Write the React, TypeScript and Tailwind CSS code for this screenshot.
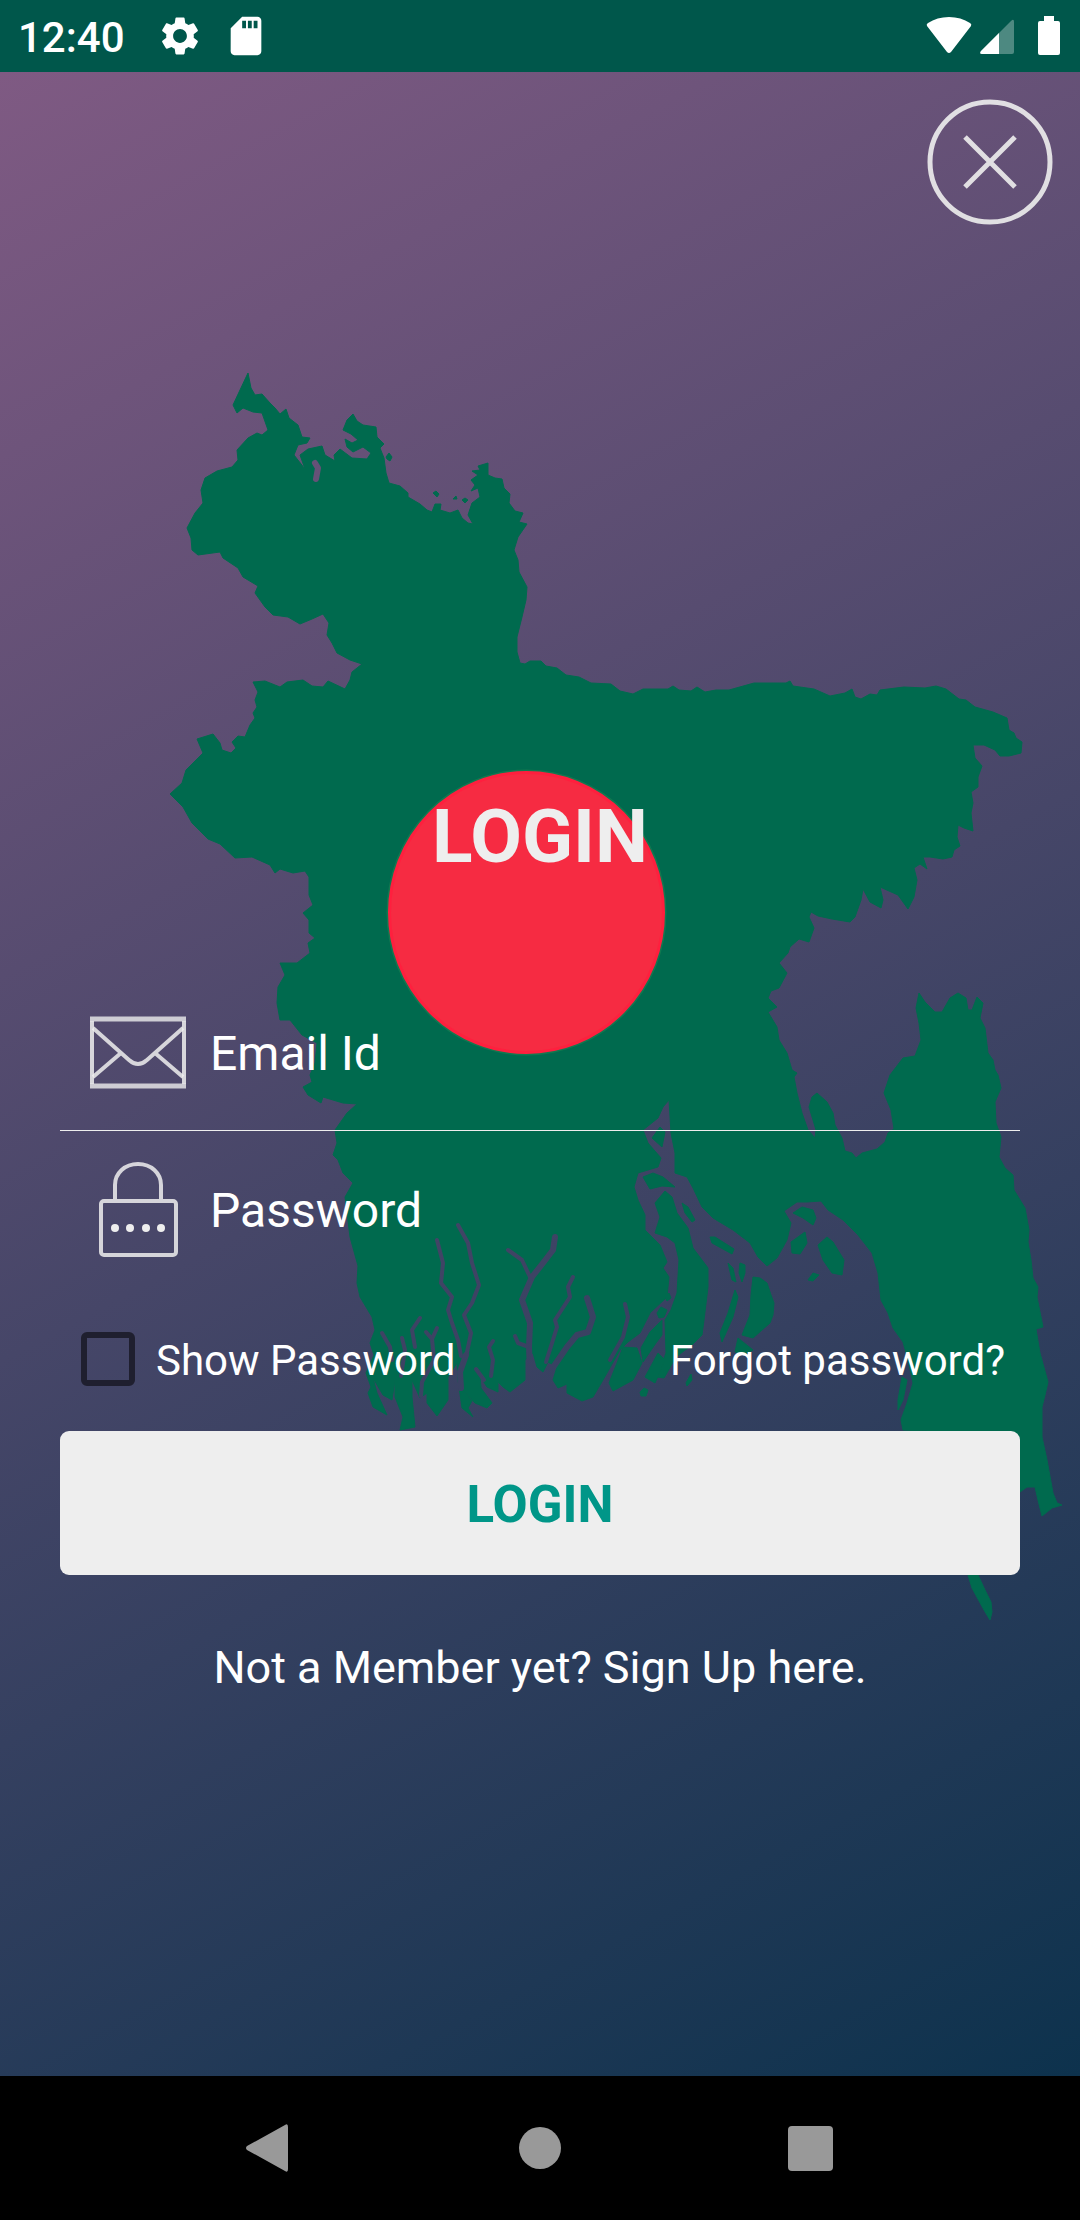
import { useState } from "react";
import { MdSdCard, MdSettings } from "react-icons/md";

const MAINLAND =
  "M248 373L251 388 255 395 262 394 270 403 275 408 280 414 286 409 289 418 298 425 302 437 310 438 307 443 298 445 294 455 305 469 300 455 308 449 322 446 325 455 335 461 334 455 340 449 352 458 367 459 371 453 363 447 353 452 347 447 345 439 352 443 358 440 351 434 343 430 347 420 353 414 357 421 363 425 376 427 377 437 384 444 380 448 384 458 386 473 389 483 400 486 408 493 408 497 420 504 427 510 432 512 435 504 441 504 440 510 450 513 458 510 462 518 468 523 473 524 468 515 472 503 480 497 478 488 471 491 475 485 471 480 478 475 472 471 480 470 478 466 488 463 488 475 495 478 502 479 504 488 510 494 509 503 515 511 523 513 519 522 527 524 518 537 514 550 518 560 519 572 527 587 526 600 522 617 517 637 517 652 520 663 525 664 530 661 541 661 546 666 557 668 566 675 579 677 591 683 611 684 620 691 633 694 643 689 668 689 673 686 679 690 691 691 697 687 705 692 716 690 729 690 754 683 786 683 790 681 793 686 814 689 830 696 845 693 852 689 855 697 861 699 870 694 877 695 880 690 904 687 925 688 936 686 946 689 959 699 966 700 975 707 993 712 1007 718 1009 730 1014 733 1016 738 1022 742 1021 753 1009 756 1000 756 995 750 984 745 973 745 975 758 982 766 978 777 978 787 971 792 973 803 971 813 973 831 964 828 958 825 957 837 960 846 954 850 952 857 943 859 930 857 923 857 927 869 920 864 914 868 917 880 914 897 908 909 898 895 880 887 883 900 881 908 870 902 863 889 861 900 855 917 850 922 832 919 818 916 811 912 809 917 814 928 809 942 799 939 790 947 788 953 779 963 787 973 779 988 771 991 768 998 777 1007 768 1012 777 1027 779 1040 787 1053 792 1070 797 1073 794 1077 797 1093 802 1113 808 1130 815 1138 816 1130 809 1107 812 1097 817 1093 827 1102 833 1113 835 1125 842 1138 845 1151 852 1153 856 1158 862 1153 877 1149 885 1142 888 1133 894 1129 891 1110 884 1093 890 1075 903 1058 915 1056 921 1040 919 1023 916 1008 919 993 925 1002 935 1012 942 1012 950 998 958 993 966 998 968 1010 972 1010 977 997 983 1003 980 1018 985 1028 988 1053 993 1060 995 1070 998 1075 1001 1088 995 1102 996 1123 1001 1137 999 1157 1005 1168 1013 1175 1014 1190 1025 1208 1029 1230 1028 1242 1031 1260 1033 1278 1038 1287 1037 1297 1043 1327 1036 1329 1040 1353 1048 1382 1045 1395 1042 1407 1042 1437 1047 1460 1053 1493 1057 1503 1062 1505 1052 1508 1042 1516 1038 1500 1035 1487 1027 1487 1020 1492 1000 1500 978 1575 985 1590 991 1602 992 1612 990 1620 984 1610 972 1588 968 1575 950 1500 927 1431 903 1430 901 1420 907 1403 913 1383 908 1360 903 1342 893 1328 888 1313 881 1300 878 1273 872 1253 858 1235 843 1220 828 1210 821 1201 807 1202 797 1202 784 1211 791 1223 787 1240 777 1258 767 1266 758 1257 750 1243 733 1230 713 1218 702 1207 693 1188 687 1177 675 1173 675 1153 671 1133 669 1100 663 1107 658 1118 643 1130 648 1143 661 1158 658 1167 638 1173 634 1187 638 1200 645 1215 645 1230 660 1245 667 1262 663 1268 669 1277 667 1297 650 1313 640 1333 628 1342 620 1350 603 1380 593 1397 582 1401 567 1393 567 1384 558 1388 553 1380 557 1367 548 1362 543 1372 537 1367 533 1353 525 1360 525 1380 510 1392 503 1387 498 1382 498 1392 487 1387 480 1376 481 1388 492 1403 487 1408 475 1403 463 1390 472 1401 468 1408 473 1417 462 1408 458 1380 457 1363 448 1377 448 1400 437 1416 427 1403 427 1393 420 1398 412 1380 412 1397 415 1427 400 1430 403 1417 395 1397 395 1380 392 1400 383 1395 373 1378 377 1393 387 1415 373 1407 368 1393 371 1387 366 1373 374 1355 370 1343 375 1330 372 1317 360 1297 357 1283 358 1266 350 1237 345 1197 353 1183 343 1173 338 1160 333 1155 337 1143 335 1130 347 1113 357 1104 343 1103 323 1097 321 1103 308 1095 303 1087 312 1082 310 1075 315 1063 317 1043 302 1035 290 1020 280 1020 277 1003 278 987 285 975 280 963 297 963 310 953 308 943 315 938 309 933 309 920 303 913 313 905 309 895 309 877 305 871 293 873 280 869 275 873 270 865 252 857 235 858 220 844 208 839 192 823 183 807 170 794 182 783 186 770 203 753 197 739 213 734 220 743 222 750 231 753 236 748 232 742 238 736 245 737 250 725 255 718 253 713 257 707 255 700 258 692 253 682 265 681 280 687 287 682 303 680 312 686 323 687 328 681 345 689 350 680 352 672 362 664 350 660 337 653 332 643 327 635 329 623 323 614 312 619 300 624 288 617 273 615 265 607 255 593 258 586 243 577 238 568 223 558 220 552 198 555 192 550 191 538 187 528 195 513 203 503 201 490 205 478 217 471 232 467 238 460 237 450 248 438 257 433 262 435 268 430 262 413 253 412 243 408 237 413 233 405 240 390Z";

const ISLANDS = [
  "M652 1138L660 1127 665 1132 662 1147Z",
  "M643 1177L653 1173 663 1177 675 1187 662 1186 650 1189Z",
  "M665 1191L672 1197 677 1213 688 1228 693 1248 708 1268 708 1287 704 1320 702 1335 693 1344 676 1357 664 1378 657 1377 666 1353 665 1320 671 1310 677 1293 679 1260 675 1243 667 1237 655 1233 660 1217 655 1203Z",
  "M682 1203L688 1207 695 1220 692 1222 685 1213Z",
  "M710 1237L715 1237 734 1249 732 1254 712 1243Z",
  "M728 1263L733 1268 736 1282 732 1280Z",
  "M740 1263L745 1265 745 1273 742 1282 739 1273Z",
  "M735 1290L738 1297 733 1317 722 1342 720 1333 728 1313Z",
  "M753 1277L760 1278 767 1283 771 1295 774 1303 773 1315 770 1323 753 1338 742 1335 750 1315 751 1295Z",
  "M738 1338L753 1350 745 1354 735 1352Z",
  "M793 1213L802 1207 813 1210 816 1218 813 1225 803 1218Z",
  "M805 1232L807 1243 800 1254 792 1253 791 1242Z",
  "M827 1237L833 1242 844 1260 842 1275 832 1273 823 1260 818 1245Z",
  "M808 1280L813 1273 819 1275 813 1281Z",
  "M902 1377L907 1380 903 1400 898 1410 898 1400Z",
  "M662 1320L662 1335 656 1343 643 1362 641 1348 650 1332Z",
  "M623 1347L637 1348 642 1363 633 1380 613 1391 609 1383 617 1363Z",
  "M658 1353L665 1360 655 1383 645 1377Z",
  "M640 1392L644 1388 648 1390 646 1396 641 1396Z",
  "M657 1313L661 1307 667 1310 664 1317 659 1318Z",
  "M665 1297L669 1293 671 1298 667 1301Z",
  "M686 1383L691 1374 692 1380 687 1386Z",
  "M386 457L389 453 392 457 390 461 387 459Z",
  "M433 493L436 491 439 494 437 497Z",
  "M453 499L456 496 457 499Z",
  "M462 500L465 498 468 500 465 503Z",
];

const RIVERS = [
  "M437 1240L443 1263 441 1283 452 1297 448 1310 452 1323 458 1340 461 1356",
  "M458 1225L468 1243 472 1263 479 1285 472 1303 464 1315 471 1333 466 1357",
  "M508 1250L522 1260 530 1277",
  "M573 1277L568 1287 570 1297 555 1320 557 1327 552 1343 546 1362",
  "M625 1304L628 1317 623 1337 610 1360",
  "M420 1318L412 1330 415 1347",
  "M382 1333L390 1347 392 1360",
  "M402 1338L405 1350 401 1376",
  "M426 1332L432 1339 437 1328M432 1339L434 1360 422 1382 421 1396",
  "M493 1341L489 1347 493 1360 491 1376M476 1369L484 1380",
  "M515 1336L518 1343 529 1347",
];

const WIDE_RIVERS = [
  "M555 1237L553 1250 543 1263 532 1277 522 1300 530 1323 529 1347 530 1372",
  "M587 1298L593 1317 588 1332 577 1335 567 1347 554 1366",
  "M466 1355L460 1372 461 1388",
  "M315 463L318 468 316 479",
];

function MapArt() {
  return (
    <svg
      aria-hidden="true"
      viewBox="0 72 1080 2004"
      className="pointer-events-none absolute inset-0 h-full w-full"
    >
      <mask id="rivers" maskUnits="userSpaceOnUse" x="0" y="72" width="1080" height="2004">
        <rect x="0" y="72" width="1080" height="2004" fill="white" />
        <g fill="none" stroke="black" strokeLinecap="round" strokeLinejoin="round">
          {RIVERS.map((d) => (
            <path key={d} d={d} strokeWidth="4" />
          ))}
          {WIDE_RIVERS.map((d) => (
            <path key={d} d={d} strokeWidth="6" />
          ))}
        </g>
      </mask>
      <g fill="#006a4e" stroke="#006a4e" strokeWidth="1" strokeLinejoin="round">
        <path d={MAINLAND} mask="url(#rivers)" />
        {ISLANDS.map((d) => (
          <path key={d} d={d} />
        ))}
      </g>
      <ellipse cx="526.5" cy="912.5" rx="140" ry="143" fill="#117850" />
      <ellipse cx="526.5" cy="912.5" rx="137" ry="140" fill="#f62b42" stroke="#ff1f3e" strokeWidth="3" />
    </svg>
  );
}

function StatusBar() {
  return (
    <header className="flex h-[72px] items-center justify-between bg-[#00574b] pr-5 pl-[18px] text-white">
      <div className="flex items-center">
        <span className="pt-1 text-[42px] leading-none font-medium">12:40</span>
        <MdSettings size={46} className="ml-8" />
        <MdSdCard size={46} className="ml-5" />
      </div>
      <div className="flex items-center">
        <svg width="46" height="40" viewBox="0 0 46 40" fill="currentColor" aria-hidden="true">
          <path d="M1 10Q0 8 2 7Q11 1 23 1T44 7Q46 8 45 10L25 36Q23 38 21 36Z" />
        </svg>
        <svg width="34" height="40" viewBox="0 0 34 40" fill="currentColor" aria-hidden="true" className="ml-2">
          <path d="M31 5Q34 2 34 6V36Q34 38 32 38H2Q-1 38 1 35Z" opacity="0.3" />
          <path d="M19 17V38H2Q-1 38 1 35Z" />
        </svg>
        <svg width="22" height="40" viewBox="0 0 22 40" fill="currentColor" aria-hidden="true" className="ml-6">
          <path d="M6 0H16V5H20Q22 5 22 7V37Q22 39 20 39H2Q0 39 0 37V7Q0 5 2 5H6Z" />
        </svg>
      </div>
    </header>
  );
}

function MailIcon() {
  return (
    <svg width="96" height="96" viewBox="0 0 96 96" fill="none" stroke="#eeeeee" strokeOpacity="0.85" strokeWidth="4" aria-hidden="true" className="shrink-0">
      <path d="M0 15H96M0 82H96" strokeWidth="5" strokeOpacity="0.8" />
      <path d="M2 17V80M94 17V80" />
      <path d="M3 24L39 56Q48 64 57 56L93 24M3 73L31 49M93 73L65 49" />
    </svg>
  );
}

function LockIcon() {
  return (
    <svg width="96" height="96" viewBox="0 0 96 96" fill="none" stroke="#eeeeee" strokeOpacity="0.85" strokeWidth="4" aria-hidden="true" className="shrink-0">
      <rect x="11" y="40" width="75" height="54" rx="3" />
      <path d="M25 38V24C25 12 35 3 48 3S71 12 71 24V38" />
      <g fill="#eeeeee" stroke="none">
        <circle cx="25" cy="67" r="4" />
        <circle cx="40" cy="67" r="4" />
        <circle cx="56" cy="67" r="4" />
        <circle cx="71" cy="67" r="4" />
      </g>
    </svg>
  );
}

const FIELD =
  "min-w-0 flex-1 bg-transparent pt-1 text-[48px] leading-[56px] text-white outline-none placeholder:text-white placeholder:opacity-100";

export default function App() {
  const [shown, setShown] = useState(false);

  return (
    <div className="flex min-h-screen flex-col font-['Roboto',sans-serif]">
      <StatusBar />

      <main className="relative flex-1 bg-[linear-gradient(152deg,#7f5a83,#0d324d)]">
        <MapArt />
        <div className="relative">
          <div className="flex justify-end p-[27px]">
            <button type="button" aria-label="Close">
              <svg width="126" height="126" viewBox="0 0 126 126" fill="none" stroke="#eeeeee" strokeOpacity="0.9" aria-hidden="true">
                <circle cx="63" cy="63" r="60" strokeWidth="5" />
                <path d="M38 38L88 88M88 38L38 88" strokeWidth="5" />
              </svg>
            </button>
          </div>

          <form className="mt-[540px] px-[60px]" onSubmit={(e) => e.preventDefault()}>
            <h1 className="mb-[94px] text-center text-[75px] leading-[88px] font-bold text-[#eeeeee]">LOGIN</h1>

            <label className="flex h-[156px] items-center gap-6 px-[30px]">
              <MailIcon />
              <input type="email" aria-label="Email Id" placeholder="Email Id" className={FIELD} />
            </label>
            <div className="h-px bg-[#eeeeee]" />
            <label className="flex h-[156px] items-center gap-6 px-[30px]">
              <LockIcon />
              <input
                type={shown ? "text" : "password"}
                aria-label="Password"
                placeholder="Password"
                className={FIELD}
              />
            </label>

            <div className="flex h-[144px] items-center justify-between pr-[15px] pl-[21px] text-[42px] leading-[50px] text-white">
              <label className="flex items-center gap-[21px]">
                <input
                  type="checkbox"
                  checked={shown}
                  onChange={(e) => setShown(e.target.checked)}
                  className="size-[54px] appearance-none rounded-[6px] border-[6px] border-[#1f1f2f] checked:bg-[#009688]"
                />
                <span className="pt-1">Show Password</span>
              </label>
              <a href="#forgot" className="pt-1">
                Forgot password?
              </a>
            </div>

            <button
              type="submit"
              className="h-[144px] w-full rounded-[9px] bg-[#eeeeee] pt-1 text-[51px] font-bold text-[#009688]"
            >
              LOGIN
            </button>

            <p className="mt-16 text-center text-[45px] leading-[58px] text-white">
              <a href="#signup">Not a Member yet? Sign Up here.</a>
            </p>
          </form>
        </div>
      </main>

      <nav className="flex h-[144px] items-center justify-center bg-black text-[#999999]">
        <button type="button" aria-label="Back" className="flex w-1/4 justify-center">
          <svg width="48" height="48" viewBox="0 0 48 48" fill="currentColor" aria-hidden="true">
            <path d="M39 1Q42 -1 42 3V45Q42 49 39 47L1 26Q-1 24 1 22Z" />
          </svg>
        </button>
        <button type="button" aria-label="Home" className="flex w-1/4 justify-center">
          <span className="size-[42px] rounded-full bg-current" />
        </button>
        <button type="button" aria-label="Recent apps" className="flex w-1/4 justify-center">
          <span className="size-[45px] rounded-[4px] bg-current" />
        </button>
      </nav>
    </div>
  );
}
